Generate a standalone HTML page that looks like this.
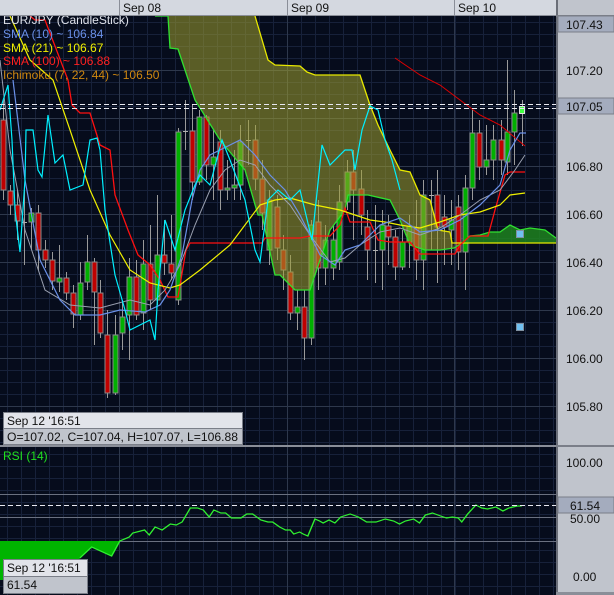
<!DOCTYPE html>
<html><head><meta charset="utf-8"><style>
html,body{margin:0;padding:0;background:#060c1c;width:614px;height:595px;overflow:hidden;font-family:"Liberation Sans",sans-serif}
svg{display:block}
text{font-family:"Liberation Sans",sans-serif}
</style></head><body>
<svg width="614" height="595" xmlns="http://www.w3.org/2000/svg">
<defs>
<pattern id="gm" x="7" y="10" width="14" height="12" patternUnits="userSpaceOnUse">
<path d="M0.5 0V12M0 0.5H14" stroke="#17213a" stroke-width="1" fill="none"/>
</pattern>
<clipPath id="cm"><rect x="0" y="16" width="556" height="430"/></clipPath>
<clipPath id="cr"><rect x="0" y="447" width="556" height="148"/></clipPath>
</defs>
<rect x="0" y="0" width="614" height="595" fill="#060c1c"/>
<rect x="0" y="16" width="556" height="579" fill="url(#gm)"/>
<g stroke="#2e384c" stroke-width="1">
<path d="M0 70.5H556M0 118.5H556M0 166.5H556M0 214.5H556M0 262.5H556M0 310.5H556M0 358.5H556M0 406.5H556"/>
<path d="M119.5 16V595M287.5 16V595M454.5 16V595"/>
<path d="M0 494.5H556M0 541.5H556M0 517.5H556" stroke="#6a7080"/>
</g>
<g clip-path="url(#cm)">
<path stroke="#9a9a9a" stroke-width="1" fill="none" d="M3.5 100V200M10.5 185V215M17.5 190V240M24.5 190V265M31.5 208V250M38.5 205V270M45.5 240V268M52.5 252V290M59.5 245V292M66.5 272V300M73.5 285V328M80.5 262V320M87.5 235V290M94.5 258V345M100.5 280V338M107.5 310V398M115.5 315V395M122.5 300V350M129.5 258V360M136.5 260V320M143.5 240V330M150.5 225V310M157.5 195V305M164.5 220V275M171.5 215V280M178.5 128V305M185.5 100V150M192.5 105V200M199.5 110V185M206.5 115V180M213.5 130V200M220.5 130V210M227.5 160V200M234.5 150V200M240.5 125V200M248.5 120V165M255.5 125V190M262.5 160V230M269.5 190V265M277.5 195V260M283.5 235V290M290.5 255V320M297.5 290V330M304.5 290V360M311.5 220V345M318.5 200V290M325.5 225V285M333.5 225V280M339.5 185V270M347.5 160V210M353.5 150V240M361.5 170V235M367.5 210V280M375.5 205V283M382.5 210V290M388.5 215V265M395.5 230V280M402.5 230V270M409.5 215V268M416.5 200V280M423.5 180V290M431.5 180V250M437.5 170V283M444.5 195V265M451.5 200V265M458.5 195V270M465.5 175V290M472.5 110V200M479.5 120V180M486.5 125V175M493.5 125V180M501.5 120V175M507.5 60V175M514.5 90V165M522.5 100V146"/>
<g fill="#c00000" stroke="#8a8a8a" stroke-width="1">
<rect x="1" y="120" width="5" height="70"/><rect x="8" y="191" width="5" height="14"/><rect x="15" y="205" width="5" height="16"/><rect x="36" y="213" width="5" height="37"/><rect x="43" y="250" width="5" height="10"/><rect x="50" y="260" width="5" height="21"/><rect x="64" y="278" width="5" height="15"/><rect x="71" y="293" width="5" height="21"/><rect x="92" y="262" width="5" height="30"/><rect x="98" y="293" width="5" height="40"/><rect x="105" y="335" width="5" height="58"/><rect x="134" y="277" width="5" height="38"/><rect x="148" y="264" width="5" height="36"/><rect x="162" y="255" width="5" height="8"/><rect x="169" y="264" width="5" height="9"/><rect x="190" y="131" width="5" height="51"/><rect x="204" y="117" width="5" height="48"/><rect x="218" y="142" width="5" height="48"/><rect x="253" y="140" width="5" height="39"/><rect x="260" y="179" width="5" height="34"/><rect x="275" y="207" width="5" height="41"/><rect x="281" y="250" width="5" height="20"/><rect x="288" y="272" width="5" height="41"/><rect x="302" y="307" width="5" height="31"/><rect x="316" y="222" width="5" height="46"/><rect x="351" y="172" width="5" height="18"/><rect x="359" y="189" width="5" height="26"/><rect x="365" y="227" width="5" height="23"/><rect x="386" y="226" width="5" height="11"/><rect x="393" y="237" width="5" height="30"/><rect x="414" y="228" width="5" height="32"/><rect x="435" y="195" width="5" height="32"/><rect x="442" y="217" width="5" height="10"/><rect x="456" y="207" width="5" height="45"/><rect x="477" y="133" width="5" height="34"/><rect x="499" y="140" width="5" height="20"/>
</g>
<g fill="#00b000" stroke="#8a8a8a" stroke-width="1">
<rect x="29" y="213" width="5" height="9"/><rect x="57" y="278" width="5" height="4"/><rect x="78" y="283" width="5" height="32"/><rect x="85" y="262" width="5" height="20"/><rect x="113" y="335" width="5" height="58"/><rect x="120" y="317" width="5" height="16"/><rect x="127" y="277" width="5" height="38"/><rect x="141" y="264" width="5" height="49"/><rect x="155" y="255" width="5" height="45"/><rect x="176" y="132" width="5" height="168"/><rect x="197" y="117" width="5" height="65"/><rect x="211" y="157" width="5" height="8"/><rect x="225" y="188" width="5" height="2"/><rect x="232" y="185" width="5" height="3"/><rect x="238" y="142" width="5" height="43"/><rect x="267" y="200" width="5" height="50"/><rect x="295" y="307" width="5" height="6"/><rect x="309" y="225" width="5" height="113"/><rect x="323" y="240" width="5" height="28"/><rect x="331" y="240" width="5" height="28"/><rect x="337" y="202" width="5" height="60"/><rect x="345" y="172" width="5" height="30"/><rect x="380" y="225" width="5" height="25"/><rect x="400" y="242" width="5" height="25"/><rect x="407" y="226" width="5" height="16"/><rect x="421" y="195" width="5" height="65"/><rect x="449" y="220" width="5" height="10"/><rect x="463" y="188" width="5" height="64"/><rect x="470" y="133" width="5" height="55"/><rect x="484" y="160" width="5" height="7"/><rect x="491" y="140" width="5" height="20"/><rect x="505" y="132" width="5" height="30"/><rect x="512" y="113" width="5" height="19"/>
</g>
<rect x="519.5" y="106.5" width="5" height="7" fill="#40ff40" stroke="#e0e0e0"/>
<g stroke="#b0b0b0"><path d="M22 222.5H27M183 131.5H188M246 140.5H251M373 250.5H378M429 195.5H434"/></g>
<path fill="#a0a030" fill-opacity="0.55" d="M155 16L168 16L170 48L178 49L195 100L220 140L245 170L258 215L262 215L275 275L280 275L295 290L310 290L330 230L345 210L348 195L368 195L390 200L400 220L410 245L425 250L440 250L454 248L450 232L438 230L430 200L420 195L410 172L400 170L390 150L378 125L370 105L360 75L315 75L307 72L300 66L275 65L268 60L255 16Z"/>
<path fill="#1f8a1f" fill-opacity="0.8" d="M460 243L470 236L480 235L490 232L500 232L510 225L520 230L530 228L545 230L556 238L556 243Z"/>
<path fill="none" stroke="#30e030" stroke-width="1.3" d="M155 16L168 16L170 48L178 49L195 100L220 140L245 170L258 215L262 215L275 275L280 275L295 290L310 290L330 230L345 210L348 195L368 195L390 200L400 220L410 245L425 250L440 250L454 248L462 243L470 236L480 235L490 232L500 232L510 225L520 230L530 228L545 230L556 238"/>
<path fill="none" stroke="#e8e800" stroke-width="1.3" d="M255 16L268 60L275 65L300 66L307 72L315 75L360 75L370 105L378 125L390 150L400 170L410 172L420 195L430 200L438 230L450 232L452 243L556 243"/>
<path fill="none" stroke="#e00000" stroke-width="1" d="M395 58L420 75L440 85L460 100L480 115L500 125L525 146"/>
<path fill="none" stroke="#ff1010" stroke-width="1.3" d="M30 16L35 20L45 20L68 80L72 105L80 113L90 113L100 145L110 150L115 195L128 230L138 255L150 265L160 280L168 297L178 297L186 250L190 243L262 243L265 238L300 238L310 236L330 236L340 225L345 208L350 222L370 222L378 240L390 242L410 242L420 254L455 254L460 245L470 236L488 236L495 210L505 175L510 172L525 172"/>
<path fill="none" stroke="#f0f000" stroke-width="1.2" d="M10 16L30 60L53 80L70 130L90 190L110 235L130 270L150 283L170 288L180 285L200 270L230 245L260 205L275 200L290 198L315 205L340 210L355 215L370 220L385 222L400 225L420 228L440 222L460 215L480 212L500 205L510 195L525 193"/>
<path fill="none" stroke="#9aa0b0" stroke-width="1" d="M0 60L10 150L25 230L45 290L70 305L100 308L130 300L150 305L165 290L180 265L195 225L210 190L225 170L240 160L255 165L270 185L290 205L310 235L330 262L345 258L360 245L380 232L400 228L420 235L440 228L460 215L480 200L500 190L515 170L525 155"/>
<path fill="none" stroke="#6a90e8" stroke-width="1.2" d="M13 80L25 180L40 260L60 300L75 315L100 315L120 310L145 312L160 305L170 290L182 255L192 200L200 170L210 155L230 145L240 140L255 155L270 175L285 190L300 215L320 255L335 265L345 250L360 245L380 225L400 218L420 232L440 230L460 220L480 205L500 185L510 150L520 133L526 133"/>
<path fill="none" stroke="#00f0ff" stroke-width="1.2" d="M0 110L8 85L12 140L15 210L20 252L25 180L26 130L33 130L38 170L42 177L48 115L55 163L63 155L70 190L83 185L90 140L97 138L100 150L105 210L115 275L125 310L130 330L150 320L155 340L158 290L165 220L175 250L185 210L195 185L200 175L210 185L222 140L230 160L245 200L255 250L260 262L268 200L278 190L290 200L300 190L312 240L322 145L330 165L345 150L352 150L355 170L362 130L370 106L378 110L385 140L392 160L400 190"/>
<path stroke="#e8e8f0" stroke-width="1" stroke-dasharray="5,3" d="M0 104.5H556M0 108.5H556"/>
<rect x="516.5" y="230.5" width="7" height="7" fill="#70c0f0" stroke="#8090a0"/>
<rect x="516.5" y="323.5" width="7" height="7" fill="#70c0f0" stroke="#8090a0"/>
</g>
<g font-size="12">
<text x="3" y="24" fill="#dde0e8">EUR/JPY (CandleStick)</text>
<text x="3" y="38" fill="#6a90e8">SMA (10) ~ 106.84</text>
<text x="3" y="52" fill="#f0f000">SMA (21) ~ 106.67</text>
<text x="3" y="65" fill="#ff2020">SMA (100) ~ 106.88</text>
<text x="3" y="79" fill="#d08810">Ichimoku (7, 22, 44) ~ 106.50</text>
</g>
<rect x="3.5" y="412.5" width="239" height="16" fill="#e2e4ea" stroke="#7a7e88"/>
<rect x="3.5" y="428.5" width="239" height="16" fill="#c0c4cc" stroke="#7a7e88"/>
<text x="7" y="425" font-size="12" fill="#111">Sep 12 '16:51</text>
<text x="7" y="441" font-size="12" fill="#111" textLength="231" lengthAdjust="spacingAndGlyphs">O=107.02, C=107.04, H=107.07, L=106.88</text>
<rect x="0" y="445" width="556" height="2" fill="#8a8e98"/>
<g clip-path="url(#cr)">
<path fill="#00b400" d="M0 541L120 541L112 556L92 547L80 558L70 580L0 580Z"/>
<path fill="none" stroke="#30f030" stroke-width="1.2" transform="matrix(1.175 0 0 1 0 0)" d="M68 558L78 547L95 556L102 541L110 537L113 533L123 530L127 535L132 527L138 530L145 524L150 525L155 522L162 508L168 508L173 510L178 517L182 510L188 513L192 513L197 518L205 518L210 514L215 514L222 520L228 522L232 522L238 527L243 530L247 530L250 534L255 532L258 534L262 536L268 519L272 521L275 523L280 520L285 523L290 517L298 514L305 517L312 522L320 522L328 519L335 521L340 524L345 521L352 519L357 523L362 515L368 513L375 516L380 518L385 517L390 518L393 522L398 514L405 505L410 508L415 509L422 507L428 511L433 508L440 506L444 506"/>
<path stroke="#e8e8f0" stroke-width="1" stroke-dasharray="5,3" d="M0 505.5H556"/>
</g>
<text x="3" y="460" font-size="12" fill="#20e020">RSI (14)</text>
<rect x="3.5" y="559.5" width="84" height="17" fill="#e2e4ea" stroke="#7a7e88"/>
<rect x="3.5" y="576.5" width="84" height="17" fill="#c0c4cc" stroke="#7a7e88"/>
<text x="7" y="572" font-size="12" fill="#111">Sep 12 '16:51</text>
<text x="7" y="589" font-size="12" fill="#111">61.54</text>
<rect x="0" y="0" width="614" height="16" fill="#d4d8e0"/>
<rect x="0" y="15" width="556" height="1" fill="#8a8e98"/>
<g fill="#8a8e98"><rect x="119" y="0" width="1" height="16"/><rect x="287" y="0" width="1" height="16"/><rect x="454" y="0" width="1" height="16"/></g>
<g font-size="12" fill="#111"><text x="123" y="12">Sep 08</text><text x="291" y="12">Sep 09</text><text x="458" y="12">Sep 10</text></g>
<rect x="556" y="0" width="58" height="595" fill="#c0c4cc"/>
<rect x="556" y="0" width="2" height="595" fill="#6a6e78"/>
<rect x="556" y="15" width="58" height="2" fill="#7a7e88"/>
<rect x="558" y="16" width="56" height="16" fill="#a4acbe" stroke="#7a7e88"/>
<rect x="558" y="98" width="56" height="16" fill="#a4acbe" stroke="#7a7e88"/>
<rect x="556" y="445" width="58" height="2" fill="#7a7e88"/>
<rect x="558" y="497" width="56" height="16" fill="#a4acbe" stroke="#7a7e88"/>
<rect x="556" y="592" width="58" height="3" fill="#8a8e98"/>
<g font-size="12" fill="#111">
<text x="566" y="29">107.43</text>
<text x="566" y="75">107.20</text>
<text x="566" y="111">107.05</text>
<text x="566" y="171">106.80</text>
<text x="566" y="219">106.60</text>
<text x="566" y="267">106.40</text>
<text x="566" y="315">106.20</text>
<text x="566" y="363">106.00</text>
<text x="566" y="411">105.80</text>
<text x="566" y="467">100.00</text>
<text x="570" y="510">61.54</text>
<text x="570" y="523">50.00</text>
<text x="573" y="581">0.00</text>
</g>
</svg>
</body></html>
